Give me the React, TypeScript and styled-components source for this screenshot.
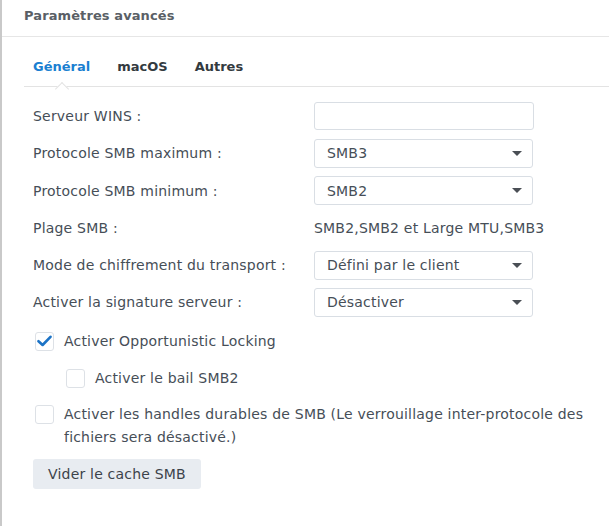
import React from "react";
import styled, { createGlobalStyle } from "styled-components";

const Global = createGlobalStyle`
  html, body { margin: 0; padding: 0; background: #fff; }
  body { font-family: "DejaVu Sans", Verdana, sans-serif; }
  * { box-sizing: border-box; }
`;

const Window = styled.div`
  width: 609px;
  height: 526px;
  background: #fff;
  border-left: 2px solid #c9c9c9;
  overflow: hidden;
`;

const Header = styled.div`
  height: 37px;
  padding: 0 0 6px 22px;
  display: flex;
  align-items: center;
  border-bottom: 1px solid #e6e6e6;
  font-size: 13px;
  font-weight: bold;
  letter-spacing: 0.1px;
  color: #5a5f66;
`;

const TabBar = styled.div`
  margin-left: 22px;
  height: 50px;
  padding: 10px 0 0 9px;
  display: flex;
  align-items: center;
  gap: 27px;
  border-bottom: 1px solid #e3e3e3;
`;

const Tab = styled.div<{ $active?: boolean }>`
  position: relative;
  font-size: 13px;
  font-weight: bold;
  color: ${(p) => (p.$active ? "#1a7fd1" : "#333a40")};
  ${(p) =>
    p.$active &&
    `
    &::after {
      content: "";
      position: absolute;
      left: 50%;
      bottom: -20px;
      width: 9px;
      height: 9px;
      margin-left: -5px;
      background: #fff;
      border-left: 1px solid #e3e3e3;
      border-top: 1px solid #e3e3e3;
      transform: rotate(45deg);
    }
  `}
`;

const Form = styled.div`
  padding: 15px 0 0 31px;
  display: flex;
  flex-direction: column;
  color: #464e57;
  font-size: 14px;
  letter-spacing: 0.2px;
`;

const Row = styled.div`
  display: flex;
  align-items: center;
  height: 28px;
  margin-bottom: 9.25px;
`;

const Label = styled.div`
  width: 281px;
  flex: none;
`;

const TextInput = styled.div`
  width: 220px;
  height: 28px;
  border: 1px solid #d9dee4;
  border-radius: 3px;
  background: #fff;
`;

const Select = styled.div`
  width: 219px;
  height: 29px;
  border: 1px solid #d9dee4;
  border-radius: 3px;
  background: #fff;
  display: flex;
  align-items: center;
  justify-content: space-between;
  padding: 0 10px 0 12px;
`;

const Caret = styled.span`
  width: 0;
  height: 0;
  border-left: 5px solid transparent;
  border-right: 5px solid transparent;
  border-top: 5px solid #4a4f55;
`;

const CheckRow = styled.div<{ $indent?: boolean; $top: number }>`
  display: flex;
  align-items: flex-start;
  margin-top: ${(p) => p.$top}px;
  padding-left: ${(p) => (p.$indent ? 33 : 2)}px;
  padding-right: 8px;
  line-height: 23px;
`;

const Box = styled.span<{ $checked?: boolean }>`
  flex: none;
  width: 19px;
  height: 19px;
  margin-top: 2px;
  margin-right: 10px;
  border: 1px solid #dde1e6;
  border-radius: 3px;
  background: #fff;
  display: flex;
  align-items: center;
  justify-content: center;
`;

const Button = styled.button`
  margin-top: 10px;
  width: 168px;
  height: 30px;
  border: none;
  border-radius: 3px;
  background: #e8ecf1;
  color: #3c434b;
  font-family: "DejaVu Sans", Verdana, sans-serif;
  font-size: 14px;
  letter-spacing: 0.2px;
  text-align: left;
  padding: 0 0 0 15px;
`;

const Check = () => (
  <svg width="15" height="12" viewBox="0 0 15 12">
    <path d="M1.5 6.2 L5.6 10 L13.5 1.8" fill="none" stroke="#1c73c6" strokeWidth="2.6" strokeLinecap="round" strokeLinejoin="round" />
  </svg>
);

const selects: [string, string][] = [
  ["Protocole SMB maximum :", "SMB3"],
  ["Protocole SMB minimum :", "SMB2"],
];

export default function App() {
  return (
    <Window>
      <Global />
      <Header>Paramètres avancés</Header>
      <TabBar>
        <Tab $active>Général</Tab>
        <Tab>macOS</Tab>
        <Tab>Autres</Tab>
      </TabBar>
      <Form>
        <Row>
          <Label>Serveur WINS :</Label>
          <TextInput />
        </Row>
        {selects.map(([l, v]) => (
          <Row key={l}>
            <Label>{l}</Label>
            <Select>
              {v}
              <Caret />
            </Select>
          </Row>
        ))}
        <Row>
          <Label>Plage SMB :</Label>
          <span>SMB2,SMB2 et Large MTU,SMB3</span>
        </Row>
        <Row>
          <Label>Mode de chiffrement du transport :</Label>
          <Select>
            Défini par le client
            <Caret />
          </Select>
        </Row>
        <Row>
          <Label>Activer la signature serveur :</Label>
          <Select>
            Désactiver
            <Caret />
          </Select>
        </Row>
        <CheckRow $top={4}>
          <Box $checked>
            <Check />
          </Box>
          <span>Activer Opportunistic Locking</span>
        </CheckRow>
        <CheckRow $indent $top={14}>
          <Box />
          <span>Activer le bail SMB2</span>
        </CheckRow>
        <CheckRow $top={13}>
          <Box />
          <span>
            Activer les handles durables de SMB (Le verrouillage inter-protocole des fichiers sera désactivé.)
          </span>
        </CheckRow>
        <Button>Vider le cache SMB</Button>
      </Form>
    </Window>
  );
}
